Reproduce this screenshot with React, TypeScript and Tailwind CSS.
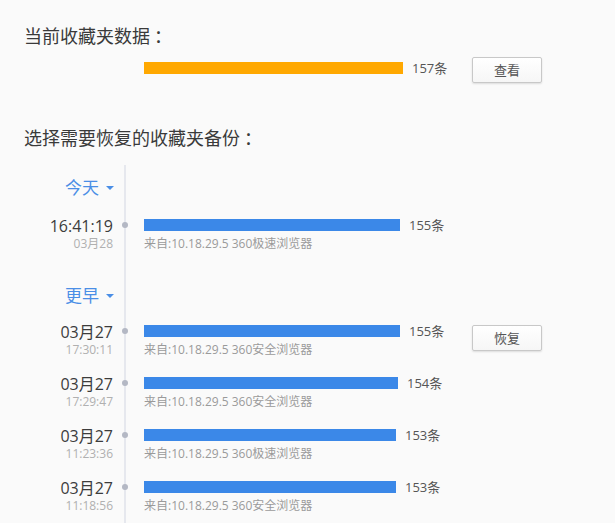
import React from "react";

type Entry = {
  main: string;
  sub: string;
  count: number;
  from: string;
  restore?: boolean;
};

const today: Entry[] = [
  { main: "16:41:19", sub: "03月28", count: 155, from: "来自:10.18.29.5 360极速浏览器" },
];

const earlier: Entry[] = [
  { main: "03月27", sub: "17:30:11", count: 155, from: "来自:10.18.29.5 360安全浏览器", restore: true },
  { main: "03月27", sub: "17:29:47", count: 154, from: "来自:10.18.29.5 360安全浏览器" },
  { main: "03月27", sub: "11:23:36", count: 153, from: "来自:10.18.29.5 360极速浏览器" },
  { main: "03月27", sub: "11:18:56", count: 153, from: "来自:10.18.29.5 360安全浏览器" },
];

const barWidth = (n: number) => Math.round(n * 1.65);

function Button({ label }: { label: string }) {
  return (
    <button className="h-[26px] w-[70px] rounded-[2px] border border-[#c8c8c8] bg-gradient-to-b from-white to-[#f6f6f6] text-[13px] leading-none text-[#555] shadow-[0_1px_2px_rgba(0,0,0,0.12)]">
      {label}
    </button>
  );
}

function Rail({ dot }: { dot?: boolean }) {
  return (
    <div className="relative flex w-[24px] justify-center">
      <div className="h-full w-[2px] bg-[#e6e8ee]" />
      {dot && (
        <span className="absolute left-[9px] top-[11px] h-[6px] w-[6px] rounded-full bg-[#b4b8c4]" />
      )}
    </div>
  );
}

function Header({ label, first }: { label: string; first?: boolean }) {
  return (
    <div className={`flex ${first ? "h-[46px]" : "h-[54px]"}`}>
      <div
        className={`flex w-[113px] items-center justify-end gap-[7px] ${first ? "pt-[13px]" : "pt-[23px]"} self-start text-[17px] leading-[20px] text-[#4a8ee6]`}
      >
        <span>{label}</span>
        <span className="mr-[-1px] h-0 w-0 border-x-[4px] border-t-[4px] border-x-transparent border-t-[#4a8ee6]" />
      </div>
      <Rail />
    </div>
  );
}

function Row({ e }: { e: Entry }) {
  return (
    <div className="flex h-[52px]">
      <div className="w-[113px] pt-[5px] text-right">
        <div className="text-[16px] leading-[20px] text-[#3c3c3c]">{e.main}</div>
        <div className="text-[12px] leading-[15px] text-[#b0b0b0]">{e.sub}</div>
      </div>
      <Rail dot />
      <div className="flex pl-[7px] pt-[8px]">
        <div className="w-[328px]">
          <div className="flex items-center gap-[9px]">
            <div className="h-[12px] bg-[#3b88e8]" style={{ width: barWidth(e.count) }} />
            <span className="text-[13px] leading-[12px] text-[#555]">{e.count}条</span>
          </div>
          <div className="mt-[5px] text-[12px] leading-[16px] text-[#9a9a9a]">{e.from}</div>
        </div>
        {e.restore && <Button label="恢复" />}
      </div>
    </div>
  );
}

export default function App() {
  return (
    <div
      className="h-[523px] w-[615px] overflow-hidden bg-[#fafafa]"
      style={{ fontFamily: '"Open Sans", "Noto Sans CJK SC", sans-serif' }}
    >
      <div className="pl-[24px] pt-[24px] text-[18px] leading-[24px] text-[#3a3a3a]">
        当前收藏夹数据<span className="ml-[4px]">：</span>
      </div>
      <div className="mt-[9px] flex h-[26px] pl-[144px]">
        <div className="flex w-[328px] items-start gap-[9px] pt-[5px]">
          <div className="h-[12px] w-[259px] bg-[#ffa800]" />
          <span className="text-[13px] leading-[12px] text-[#555]">157条</span>
        </div>
        <Button label="查看" />
      </div>
      <div className="mt-[43px] pl-[24px] text-[18px] leading-[24px] text-[#3a3a3a]">
        选择需要恢复的收藏夹备份<span className="ml-[4px]">：</span>
      </div>
      <div className="mt-[15px]">
        <Header label="今天" first />
        {today.map((e, i) => (
          <Row key={i} e={e} />
        ))}
        <Header label="更早" />
        {earlier.map((e, i) => (
          <Row key={i} e={e} />
        ))}
      </div>
    </div>
  );
}
